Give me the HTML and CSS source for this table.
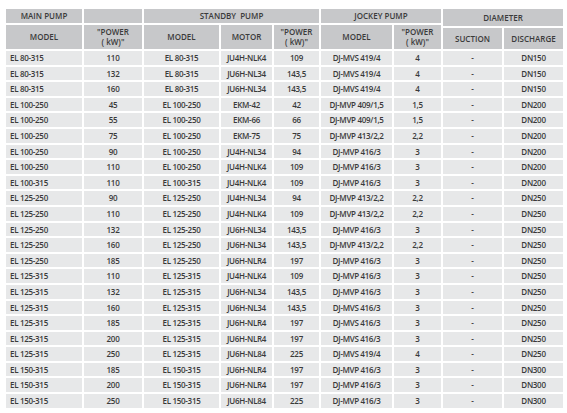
FILE: index.html
```html
<!DOCTYPE html>
<html>
<head>
<meta charset="utf-8">
<link rel="stylesheet" href="styles.css">
</head>
<body>
<div class="grid">
  <div class="h h-main">MAIN PUMP</div>
  <div class="h h-blank"></div>
  <div class="h h-standby">STANDBY&nbsp; PUMP</div>
  <div class="h h-jockey">JOCKEY PUMP</div>
  <div class="h h-diam">DIAMETER</div>
  <div class="h h2 c1">MODEL</div>
  <div class="h h2 c2">"POWER<br>( kW)"</div>
  <div class="h h2 c3">MODEL</div>
  <div class="h h2 c4">MOTOR</div>
  <div class="h h2 c5">"POWER<br>( kW)"</div>
  <div class="h h2 c6">MODEL</div>
  <div class="h h2 c7">"POWER<br>( kW)"</div>
  <div class="h h3 c8">SUCTION</div>
  <div class="h h3 c9">DISCHARGE</div>

  <div class="d l">EL 80-315</div><div class="d">110</div><div class="d">EL 80-315</div><div class="d">JU4H-NLK4</div><div class="d">109</div><div class="d">DJ-MVS 419/4</div><div class="d">4</div><div class="d">-</div><div class="d">DN150</div>
  <div class="d l">EL 80-315</div><div class="d">132</div><div class="d">EL 80-315</div><div class="d">JU6H-NL34</div><div class="d">143,5</div><div class="d">DJ-MVS 419/4</div><div class="d">4</div><div class="d">-</div><div class="d">DN150</div>
  <div class="d l">EL 80-315</div><div class="d">160</div><div class="d">EL 80-315</div><div class="d">JU6H-NL34</div><div class="d">143,5</div><div class="d">DJ-MVS 419/4</div><div class="d">4</div><div class="d">-</div><div class="d">DN150</div>
  <div class="d l">EL 100-250</div><div class="d">45</div><div class="d">EL 100-250</div><div class="d">EKM-42</div><div class="d">42</div><div class="d">DJ-MVP 409/1,5</div><div class="d">1,5</div><div class="d">-</div><div class="d">DN200</div>
  <div class="d l">EL 100-250</div><div class="d">55</div><div class="d">EL 100-250</div><div class="d">EKM-66</div><div class="d">66</div><div class="d">DJ-MVP 409/1,5</div><div class="d">1,5</div><div class="d">-</div><div class="d">DN200</div>
  <div class="d l">EL 100-250</div><div class="d">75</div><div class="d">EL 100-250</div><div class="d">EKM-75</div><div class="d">75</div><div class="d">DJ-MVP 413/2,2</div><div class="d">2,2</div><div class="d">-</div><div class="d">DN200</div>
  <div class="d l">EL 100-250</div><div class="d">90</div><div class="d">EL 100-250</div><div class="d">JU4H-NL34</div><div class="d">94</div><div class="d">DJ-MVP 416/3</div><div class="d">3</div><div class="d">-</div><div class="d">DN200</div>
  <div class="d l">EL 100-250</div><div class="d">110</div><div class="d">EL 100-250</div><div class="d">JU4H-NLK4</div><div class="d">109</div><div class="d">DJ-MVP 416/3</div><div class="d">3</div><div class="d">-</div><div class="d">DN200</div>
  <div class="d l">EL 100-315</div><div class="d">110</div><div class="d">EL 100-315</div><div class="d">JU4H-NLK4</div><div class="d">109</div><div class="d">DJ-MVP 416/3</div><div class="d">3</div><div class="d">-</div><div class="d">DN200</div>
  <div class="d l">EL 125-250</div><div class="d">90</div><div class="d">EL 125-250</div><div class="d">JU4H-NL34</div><div class="d">94</div><div class="d">DJ-MVP 413/2,2</div><div class="d">2,2</div><div class="d">-</div><div class="d">DN250</div>
  <div class="d l">EL 125-250</div><div class="d">110</div><div class="d">EL 125-250</div><div class="d">JU4H-NLK4</div><div class="d">109</div><div class="d">DJ-MVP 413/2,2</div><div class="d">2,2</div><div class="d">-</div><div class="d">DN250</div>
  <div class="d l">EL 125-250</div><div class="d">132</div><div class="d">EL 125-250</div><div class="d">JU6H-NL34</div><div class="d">143,5</div><div class="d">DJ-MVP 416/3</div><div class="d">3</div><div class="d">-</div><div class="d">DN250</div>
  <div class="d l">EL 125-250</div><div class="d">160</div><div class="d">EL 125-250</div><div class="d">JU6H-NL34</div><div class="d">143,5</div><div class="d">DJ-MVP 413/2,2</div><div class="d">2,2</div><div class="d">-</div><div class="d">DN250</div>
  <div class="d l">EL 125-250</div><div class="d">185</div><div class="d">EL 125-250</div><div class="d">JU6H-NLR4</div><div class="d">197</div><div class="d">DJ-MVP 416/3</div><div class="d">3</div><div class="d">-</div><div class="d">DN250</div>
  <div class="d l">EL 125-315</div><div class="d">110</div><div class="d">EL 125-315</div><div class="d">JU4H-NLK4</div><div class="d">109</div><div class="d">DJ-MVP 416/3</div><div class="d">3</div><div class="d">-</div><div class="d">DN250</div>
  <div class="d l">EL 125-315</div><div class="d">132</div><div class="d">EL 125-315</div><div class="d">JU6H-NL34</div><div class="d">143,5</div><div class="d">DJ-MVP 416/3</div><div class="d">3</div><div class="d">-</div><div class="d">DN250</div>
  <div class="d l">EL 125-315</div><div class="d">160</div><div class="d">EL 125-315</div><div class="d">JU6H-NL34</div><div class="d">143,5</div><div class="d">DJ-MVS 416/3</div><div class="d">3</div><div class="d">-</div><div class="d">DN250</div>
  <div class="d l">EL 125-315</div><div class="d">185</div><div class="d">EL 125-315</div><div class="d">JU6H-NLR4</div><div class="d">197</div><div class="d">DJ-MVS 416/3</div><div class="d">3</div><div class="d">-</div><div class="d">DN250</div>
  <div class="d l">EL 125-315</div><div class="d">200</div><div class="d">EL 125-315</div><div class="d">JU6H-NLR4</div><div class="d">197</div><div class="d">DJ-MVS 416/3</div><div class="d">3</div><div class="d">-</div><div class="d">DN250</div>
  <div class="d l">EL 125-315</div><div class="d">250</div><div class="d">EL 125-315</div><div class="d">JU6H-NL84</div><div class="d">225</div><div class="d">DJ-MVS 419/4</div><div class="d">4</div><div class="d">-</div><div class="d">DN250</div>
  <div class="d l">EL 150-315</div><div class="d">185</div><div class="d">EL 150-315</div><div class="d">JU6H-NLR4</div><div class="d">197</div><div class="d">DJ-MVP 416/3</div><div class="d">3</div><div class="d">-</div><div class="d">DN300</div>
  <div class="d l">EL 150-315</div><div class="d">200</div><div class="d">EL 150-315</div><div class="d">JU6H-NLR4</div><div class="d">197</div><div class="d">DJ-MVP 416/3</div><div class="d">3</div><div class="d">-</div><div class="d">DN300</div>
  <div class="d l">EL 150-315</div><div class="d">250</div><div class="d">EL 150-315</div><div class="d">JU6H-NL84</div><div class="d">225</div><div class="d">DJ-MVP 416/3</div><div class="d">3</div><div class="d">-</div><div class="d">DN300</div>
</div>
</body>
</html>
```
FILE: styles.css
```css
html, body {
  margin: 0;
  padding: 0;
  background: #ffffff;
}
body {
  padding: 9px 0 0 6px;
  font-family: "Open Sans", "Liberation Sans", sans-serif;
  color: #3a3a3a;
}
.grid {
  display: grid;
  grid-template-columns: 76px 58px 75px 51px 45px 71px 47px 59px 59px;
  grid-template-rows: 14px 1px 21px;
  grid-auto-rows: 13.6px;
  gap: 2px;
  width: 557px;
}
.h {
  background: #c7c8ca;
  font-size: 8px;
  font-weight: 600;
  line-height: 10px;
  display: flex;
  align-items: center;
  justify-content: center;
  text-align: center;
  color: #3b3b3b;
}
.h-main { grid-column: 1; grid-row: 1; }
.h-blank { grid-column: 2; grid-row: 1; }
.h-standby { grid-column: 3 / 6; grid-row: 1; }
.h-jockey { grid-column: 6 / 8; grid-row: 1; }
.h-diam { grid-column: 8 / 10; grid-row: 1 / 3; }
.h2 { grid-row: 2 / 4; }
.h3 { grid-row: 3; }
.c1 { grid-column: 1; }
.c2 { grid-column: 2; }
.c3 { grid-column: 3; }
.c4 { grid-column: 4; }
.c5 { grid-column: 5; }
.c6 { grid-column: 6; }
.c7 { grid-column: 7; }
.c8 { grid-column: 8; }
.c9 { grid-column: 9; }
.d {
  background: #e7e8e9;
  font-size: 8px;
  font-weight: 600;
  line-height: 13.6px;
  text-align: center;
  white-space: nowrap;
  letter-spacing: -0.3px;
  color: #3a3a3a;
}
.d.l {
  text-align: left;
  padding-left: 4px;
}
```
